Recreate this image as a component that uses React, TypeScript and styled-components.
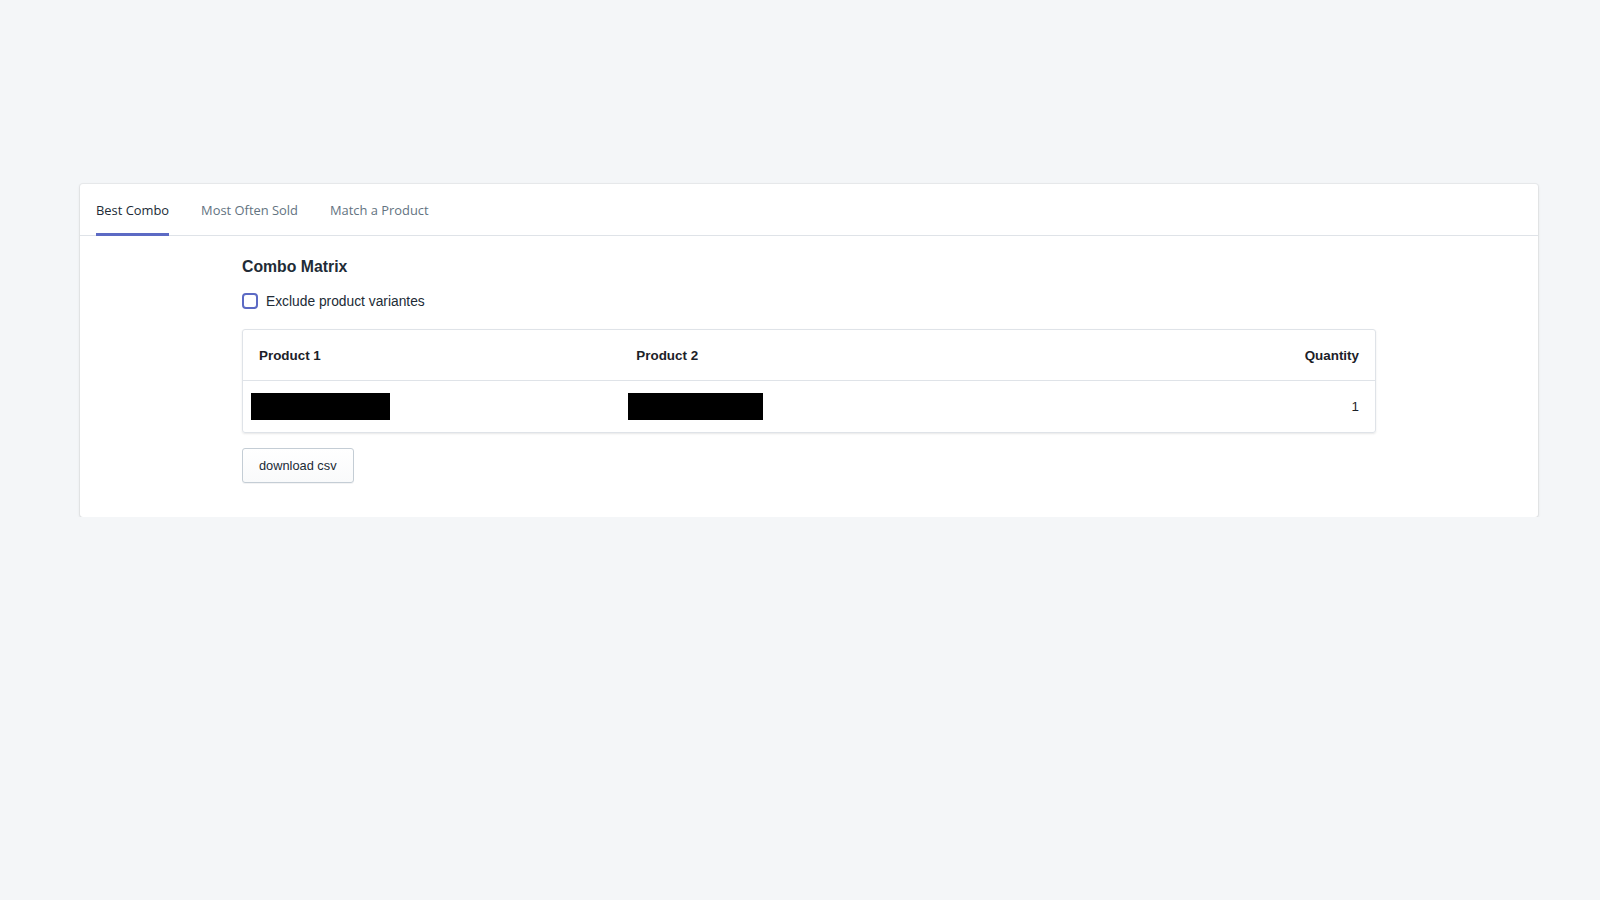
import React, { useState } from "react";
import styled, { createGlobalStyle } from "styled-components";

const GlobalStyle = createGlobalStyle`
  body {
    margin: 0;
    background: #f4f6f8;
    font-family: "Liberation Sans", Arial, sans-serif;
    color: #212b36;
  }
`;

type Row = {
  product1: string;
  product2: string;
  quantity: number;
};

const rows: Row[] = [{ product1: "", product2: "", quantity: 1 }];

const tabs = ["Best Combo", "Most Often Sold", "Match a Product"];

const Page = styled.div`
  padding: 184px 62px 0 80px;
`;

const Card = styled.div`
  background: #fff;
  border-radius: 3px;
  box-shadow: 0 0 0 1px rgba(63, 63, 68, 0.05), 0 1px 3px 0 rgba(63, 63, 68, 0.15);
`;

const TabBar = styled.ul`
  display: flex;
  margin: 0;
  padding: 0;
  list-style: none;
  border-bottom: 1px solid #dfe3e8;
`;

const Tab = styled.li`
  padding: 0 16px;
  cursor: pointer;
`;

const TabTitle = styled.span<{ $active?: boolean }>`
  display: block;
  height: 48px;
  line-height: 46px;
  font-family: "Open Sans", "Noto Sans", sans-serif;
  font-size: 12.9px;
  color: ${({ $active }) => ($active ? "#212b36" : "#637381")};
  border-bottom: 3px solid ${({ $active }) => ($active ? "#5c6ac4" : "transparent")};
  margin-bottom: -1px;
  padding-top: 1px;
  box-sizing: content-box;
  & > span {
    position: relative;
    top: 2px;
  }
`;

const Body = styled.div`
  padding: 21px 162px 34px 162px;
`;

const Heading = styled.h2`
  margin: 0;
  font-size: 15.8px;
  line-height: 20px;
  font-weight: 700;
`;

const CheckRow = styled.label`
  display: flex;
  align-items: center;
  gap: 8px;
  margin-top: 16px;
  font-size: 13.8px;
  color: #212b36;
  cursor: pointer;
`;

const Box = styled.span<{ $checked: boolean }>`
  width: 16px;
  height: 16px;
  box-sizing: border-box;
  border: 2px solid #5c6ac4;
  border-radius: 4px;
  background: ${({ $checked }) => ($checked ? "#5c6ac4" : "#fff")};
`;

const TableWrap = styled.div`
  margin-top: 20px;
  border: 1px solid #dfe3e8;
  border-radius: 3px;
  box-shadow: 0 1px 2px rgba(63, 63, 68, 0.12);
`;

const Table = styled.table`
  width: 100%;
  border-collapse: collapse;
  table-layout: fixed;
  font-size: 13.4px;
  color: #1c2128;
`;

const Th = styled.th<{ $right?: boolean }>`
  height: 50px;
  padding: 0 16px;
  text-align: ${({ $right }) => ($right ? "right" : "left")};
  font-weight: 700;
  border-bottom: 1px solid #dfe3e8;
`;

const Td = styled.td<{ $right?: boolean }>`
  height: 51px;
  padding: 0 16px 0 8px;
  text-align: ${({ $right }) => ($right ? "right" : "left")};
`;

const Redacted = styled.span<{ $w: number }>`
  display: block;
  width: ${({ $w }) => $w}px;
  height: 27px;
  background: #000;
`;

const Button = styled.button`
  margin-top: 15px;
  height: 35px;
  padding: 0 16px;
  font-family: "Liberation Sans", Arial, sans-serif;
  font-size: 12.8px;
  color: #212b36;
  background: linear-gradient(to bottom, #fff, #f9fafb);
  border: 1px solid #c4cdd5;
  border-radius: 3px;
  box-shadow: 0 1px 0 0 rgba(22, 29, 37, 0.05);
  cursor: pointer;
`;

export default function App() {
  const [active, setActive] = useState(0);
  const [exclude, setExclude] = useState(false);

  return (
    <>
      <GlobalStyle />
      <Page>
        <Card>
          <TabBar>
            {tabs.map((t, i) => (
              <Tab key={t} onClick={() => setActive(i)}>
                <TabTitle $active={i === active}>
                  <span>{t}</span>
                </TabTitle>
              </Tab>
            ))}
          </TabBar>
          <Body>
            <Heading>Combo Matrix</Heading>
            <CheckRow onClick={() => setExclude(!exclude)}>
              <Box $checked={exclude} />
              Exclude product variantes
            </CheckRow>
            <TableWrap>
              <Table>
                <thead>
                  <tr>
                    <Th>Product 1</Th>
                    <Th>Product 2</Th>
                    <Th $right>Quantity</Th>
                  </tr>
                </thead>
                <tbody>
                  {rows.map((r, i) => (
                    <tr key={i}>
                      <Td>
                        <Redacted $w={139} />
                      </Td>
                      <Td>
                        <Redacted $w={135} />
                      </Td>
                      <Td $right>{r.quantity}</Td>
                    </tr>
                  ))}
                </tbody>
              </Table>
            </TableWrap>
            <Button>download csv</Button>
          </Body>
        </Card>
      </Page>
    </>
  );
}
